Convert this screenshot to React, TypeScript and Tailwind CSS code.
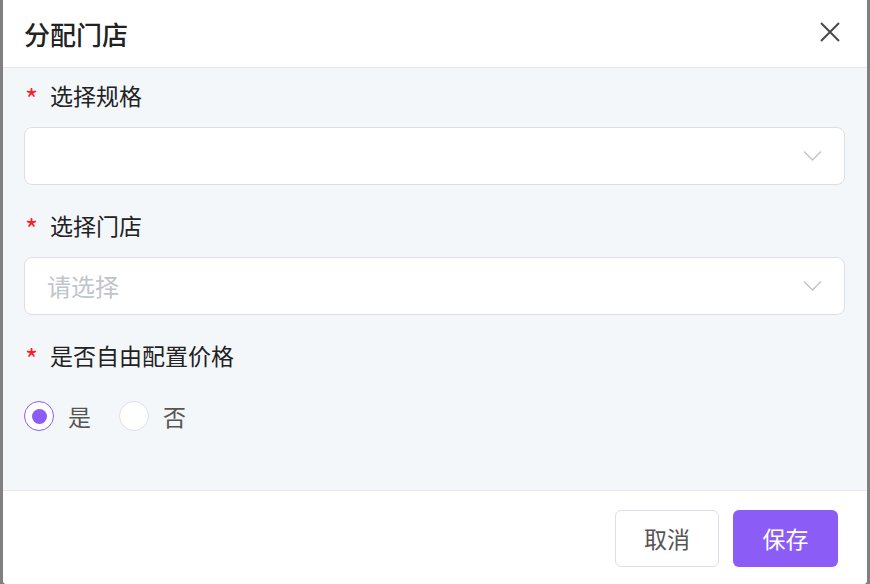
export default function App() {
  return (
    <div
      className="flex h-[584px] w-[870px] bg-[#808080]"
      style={{ fontFamily: '"Noto Sans CJK SC", "Noto Sans", sans-serif' }}
    >
      <div className="ml-[3px] flex h-[584px] w-[864px] flex-col overflow-hidden rounded-b-[4px] bg-white">
        <div className="flex h-[68px] shrink-0 items-center justify-between border-b border-[#e4e7ed] pl-[21px] pr-[26px]">
          <h1 className="text-[26px] font-medium leading-none text-[#222]">分配门店</h1>
          <svg width="22" height="22" viewBox="0 0 22 22" className="-mt-[3px]">
            <path d="M2 2L20 20M20 2L2 20" stroke="#4a4a4a" strokeWidth="2" />
          </svg>
        </div>

        <div className="flex flex-1 flex-col bg-[#f4f7fa] pl-[21px] pr-[22px] pt-[11px]">
          <Label text="选择规格" />
          <Select />
          <div className="h-[24px]" />
          <Label text="选择门店" />
          <Select placeholder="请选择" />
          <div className="h-[24px]" />
          <Label text="是否自由配置价格" />
          <div className="mt-[16px] flex h-[58px] items-center">
            <div className="flex h-[30px] w-[30px] items-center justify-center rounded-full border border-[#8b5cf6] bg-white">
              <div className="h-[15px] w-[15px] rounded-full bg-[#8b5cf6]" />
            </div>
            <span className="ml-[14px] text-[23px] leading-none text-[#555]">是</span>
            <div className="ml-[28px] h-[30px] w-[30px] rounded-full border border-[#dcdfe6] bg-white" />
            <span className="ml-[14px] text-[23px] leading-none text-[#555]">否</span>
          </div>
        </div>

        <div className="flex h-[94px] shrink-0 items-start justify-end gap-[14px] border-t border-[#e4e7ed] bg-white pr-[29px] pt-[19px]">
          <button className="flex h-[57px] w-[104px] items-center justify-center rounded-[6px] border border-[#dcdfe6] bg-white text-[23px] text-[#555]">
            取消
          </button>
          <button className="flex h-[57px] w-[105px] items-center justify-center rounded-[6px] bg-[#8b5cf6] text-[23px] text-white">
            保存
          </button>
        </div>
      </div>
    </div>
  );
}

function Label({ text }: { text: string }) {
  return (
    <div className="flex h-[32px] items-center">
      <span className="mt-[6px] w-[26px] pl-[1px] text-[28px] leading-none text-[#f5222d]">*</span>
      <span className="text-[23px] leading-none text-[#222]">{text}</span>
    </div>
  );
}

function Select({ placeholder }: { placeholder?: string }) {
  return (
    <div className="mt-[16px] flex h-[58px] items-center justify-between rounded-[8px] border border-[#dcdfe6] bg-white pl-[22px] pr-[22px]">
      <span className="text-[24px] leading-none text-[#c0c4cc]">{placeholder}</span>
      <svg width="19" height="12" viewBox="0 0 19 12">
        <path d="M1 1.5L9.5 10L18 1.5" fill="none" stroke="#c0c4cc" strokeWidth="1.5" />
      </svg>
    </div>
  );
}
